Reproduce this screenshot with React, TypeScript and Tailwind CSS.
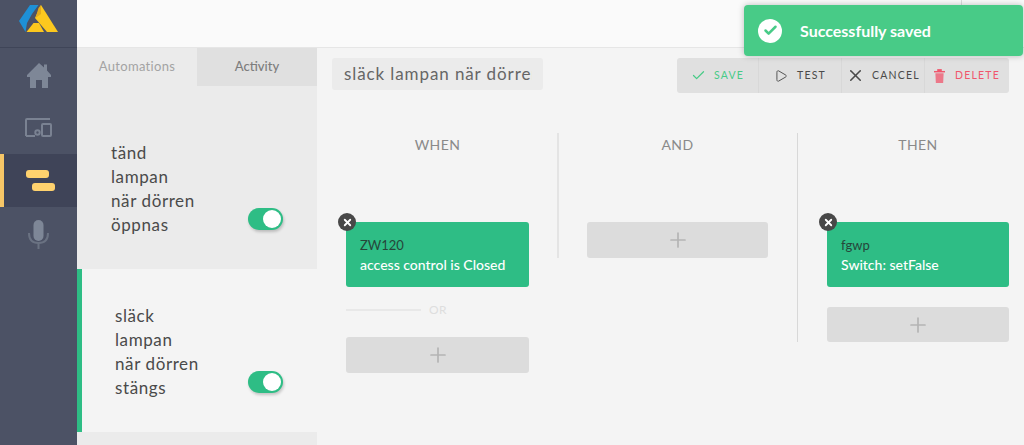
import type { ReactNode } from 'react'
import { Check, Play, X, Plus } from 'lucide-react'

const font = { fontFamily: 'Lato, "Noto Sans", sans-serif' }

function Toggle() {
  return (
    <div className="flex h-[22px] w-[35px] shrink-0 items-center justify-end rounded-full bg-[#2ebd85] pr-[2px] shadow-[1px_2px_3px_rgba(0,0,0,0.2)]">
      <div className="h-[18px] w-[18px] rounded-full bg-white" />
    </div>
  )
}

function Logo() {
  return (
    <svg width="39" height="28" viewBox="19 5 39 28">
      <path d="M30 5 L38.5 5 L32 14 L27 23 L25.5 32 L19 21 Z" fill="#1e90d6" />
      <path d="M41 5 L58 32 L47 32 L35 18 Z" fill="#fcc81e" />
      <path d="M38.5 8 L41 5 L41 14 L35.5 18 Z" fill="#e3ab1c" />
      <path d="M26.5 32 L33.5 23 L39 23 L44 32 Z" fill="#fcc81e" />
    </svg>
  )
}

function NavIcon({ kind }: { kind: 'home' | 'devices' | 'mic' }) {
  if (kind === 'home') {
    return (
      <svg width="24" height="25" viewBox="0 0 24 25" fill="#7e8797">
        <path d="M12 0 L17 4.5 L17 1.5 L20 1.5 L20 7.5 L24 12 L24 14 L21 14 L21 25 L15 25 L15 17 L9 17 L9 25 L3 25 L3 14 L0 14 L0 12 Z" />
      </svg>
    )
  }
  if (kind === 'devices') {
    return (
      <svg width="27" height="19" viewBox="0 0 27 19" fill="none" stroke="#7a8292" strokeWidth="2">
        <path d="M1 18 V2 A1 1 0 0 1 2 1 H25" />
        <path d="M1 18 H10" />
        <rect x="17" y="6" width="9" height="12" rx="1" />
        <circle cx="12.5" cy="14.5" r="2.2" />
      </svg>
    )
  }
  return (
    <svg width="21" height="29" viewBox="0 0 21 29" fill="none" stroke="#6a7282" strokeWidth="2">
      <path d="M1 13 C1 20 5 23 10.5 23 C16 23 20 20 20 13" />
      <path d="M10.5 23 V29" />
      <rect x="5.5" y="0" width="10" height="21" rx="5" fill="#7e8797" stroke="none" />
    </svg>
  )
}

function TrashIcon() {
  return (
    <svg width="11" height="14" viewBox="0 0 12 15" fill="#f0566c">
      <rect x="0" y="2" width="12" height="1.6" />
      <rect x="3.5" y="0" width="5" height="2.6" />
      <path d="M1.5 4.6 H10.5 L10 15 H2 Z" fillOpacity="0.75" />
    </svg>
  )
}

function ActionButton({ icon, label, className, width }: { icon: ReactNode; label: string; className: string; width: string }) {
  return (
    <div className={`flex h-full items-center justify-center border-r border-[#d8d8d8] text-[10.5px] tracking-[1.2px] last:border-r-0 ${width} ${className}`}>
      {icon}
      <span>{label}</span>
    </div>
  )
}

function RuleCard({ title, detail }: { title: string; detail: string }) {
  return (
    <div className="relative flex h-[65px] flex-col justify-center rounded-[3px] bg-[#2ebd85] pl-[14px] leading-[19px]">
      <div className="absolute -left-[8px] -top-[9px] flex h-[18px] w-[18px] items-center justify-center rounded-full bg-[#484848]">
        <X size={11} color="#fff" strokeWidth={4} />
      </div>
      <div className="text-[13px] text-[#26463a]">{title}</div>
      <div className="text-[14px] font-medium text-white">{detail}</div>
    </div>
  )
}

function AddCard({ height = 'h-9' }: { height?: string }) {
  return (
    <div className={`flex items-center justify-center rounded-[3px] bg-[#dcdcdc] ${height}`}>
      <Plus size={24} color="#b4b4b4" strokeWidth={1.7} />
    </div>
  )
}

function ColumnTitle({ children }: { children: ReactNode }) {
  return <h3 className="mt-[4px] text-center text-[14px] leading-[16px] tracking-[0.4px] text-[#8a8a8a]">{children}</h3>
}

export default function App() {
  return (
    <div className="relative flex h-[445px] w-[1024px] overflow-hidden bg-[#f4f4f4]" style={font}>
      <aside className="flex w-[77px] shrink-0 flex-col bg-[#4c5265]">
        <div className="flex h-[48px] items-center justify-center border-b border-[#3f4558] pb-[10px]">
          <Logo />
        </div>
        <div className="flex h-[53px] items-center justify-center pt-[1px]"><NavIcon kind="home" /></div>
        <div className="flex h-[53px] items-center justify-center"><NavIcon kind="devices" /></div>
        <div className="flex h-[53px] flex-col items-start justify-center gap-[5px] border-l-[4px] border-[#f6c667] bg-[#3f4458]">
          <div className="ml-[22px] h-[8px] w-[23px] rounded-[3px] bg-[#ffd26e]" />
          <div className="ml-[28px] h-[8px] w-[23px] rounded-[3px] bg-[#ffd26e]" />
        </div>
        <div className="flex h-[53px] items-center justify-center pt-[1px]"><NavIcon kind="mic" /></div>
      </aside>

      <div className="flex min-w-0 flex-1 flex-col">
        <header className="h-[48px] shrink-0 border-b border-[#e6e6e6] bg-[#fafafa]">
          <div className="ml-[884px] h-[5px] w-px bg-[#dcdcdc]" />
        </header>

        <div className="flex flex-1">
          <section className="flex w-[240px] shrink-0 flex-col bg-[#ebebeb]">
            <div className="flex h-[38px] text-[13px]">
              <div className="flex w-[120px] items-center justify-center tracking-[0.3px] text-[#a3a3a3]">Automations</div>
              <div className="flex w-[120px] items-center justify-center bg-[#e0e0e0] font-medium text-[#7d7d7d]">Activity</div>
            </div>
            <div className="relative h-[183px] pl-[34px] pt-[55px] text-[17px] leading-[24px] tracking-[0.6px] text-[#4a4a4a]">
              <div>tänd</div>
              <div>lampan</div>
              <div>när dörren</div>
              <div>öppnas</div>
              <div className="absolute left-[171px] top-[122px]"><Toggle /></div>
            </div>
            <div className="relative h-[163px] border-l-[5px] border-[#2ebd85] bg-[#f4f4f4] pl-[33px] pt-[35px] text-[17px] leading-[24px] tracking-[0.6px] text-[#4a4a4a]">
              <div>släck</div>
              <div>lampan</div>
              <div>när dörren</div>
              <div>stängs</div>
              <div className="absolute left-[166px] top-[102px]"><Toggle /></div>
            </div>
          </section>

          <main className="flex min-w-0 flex-1 flex-col">
            <div className="flex pl-[15px] pr-[15px] pt-[10px]">
              <div className="flex h-[32px] w-[211px] items-center overflow-hidden whitespace-nowrap rounded-[3px] bg-[#ebebeb] pl-[12px] text-[17px] tracking-[0.9px] text-[#666666]">
                <span className="block w-[188px] overflow-hidden">släck lampan när dörren</span>
              </div>
              <div className="ml-auto flex h-[35px] w-[332px] rounded-[3px] bg-[#e0e0e0]">
                <ActionButton width="w-[82px]" className="gap-[8px] text-[#48cb87]" label="SAVE" icon={<Check size={15} strokeWidth={2} />} />
                <ActionButton width="w-[83px]" className="gap-[9px] text-[#4a4a4a]" label="TEST" icon={<Play size={14} strokeWidth={1.6} />} />
                <ActionButton width="w-[83px]" className="gap-[7px] text-[#4a4a4a]" label="CANCEL" icon={<X size={19} strokeWidth={2} />} />
                <ActionButton width="w-[84px]" className="gap-[10px] text-[#f0566c]" label="DELETE" icon={<TrashIcon />} />
              </div>
            </div>

            <div className="mt-[40px] flex items-start">
              <div className="w-[240px] shrink-0 pl-[29px] pr-[28px]">
                <ColumnTitle>WHEN</ColumnTitle>
                <div className="mt-[69px]">
                  <RuleCard title="ZW120" detail="access control is Closed" />
                </div>
                <div className="mt-[15px] flex items-center gap-[8px]">
                  <div className="h-[2px] w-[75px] bg-[#e8e8e8]" />
                  <span className="text-[12px] leading-[16px] tracking-[0.5px] text-[#dedede]">OR</span>
                </div>
                <div className="mt-[19px]"><AddCard /></div>
              </div>
              <div className="h-[125px] w-[2px] shrink-0 bg-[#e4e4e4]" />
              <div className="w-[238px] shrink-0 pl-[28px] pr-[29px]">
                <ColumnTitle>AND</ColumnTitle>
                <div className="mt-[69px]"><AddCard /></div>
              </div>
              <div className="h-[209px] w-px shrink-0 bg-[#d8d8d8]" />
              <div className="min-w-0 flex-1 pl-[29px] pr-[15px]">
                <ColumnTitle>THEN</ColumnTitle>
                <div className="mt-[69px]">
                  <RuleCard title="fgwp" detail="Switch: setFalse" />
                </div>
                <div className="mt-[20px]"><AddCard height="h-[35px]" /></div>
              </div>
            </div>
          </main>
        </div>
      </div>

      <div className="absolute left-[744px] top-[5px] flex h-[51px] w-[279px] items-center gap-[18px] rounded-[4px] bg-[#48cb87] pl-[14px] shadow-[0_0_6px_rgba(0,0,0,0.25)]">
        <div className="flex h-[24px] w-[24px] items-center justify-center rounded-full bg-white">
          <Check size={15} color="#48cb87" strokeWidth={4} />
        </div>
        <span className="text-[16px] font-bold text-white">Successfully saved</span>
      </div>
    </div>
  )
}
